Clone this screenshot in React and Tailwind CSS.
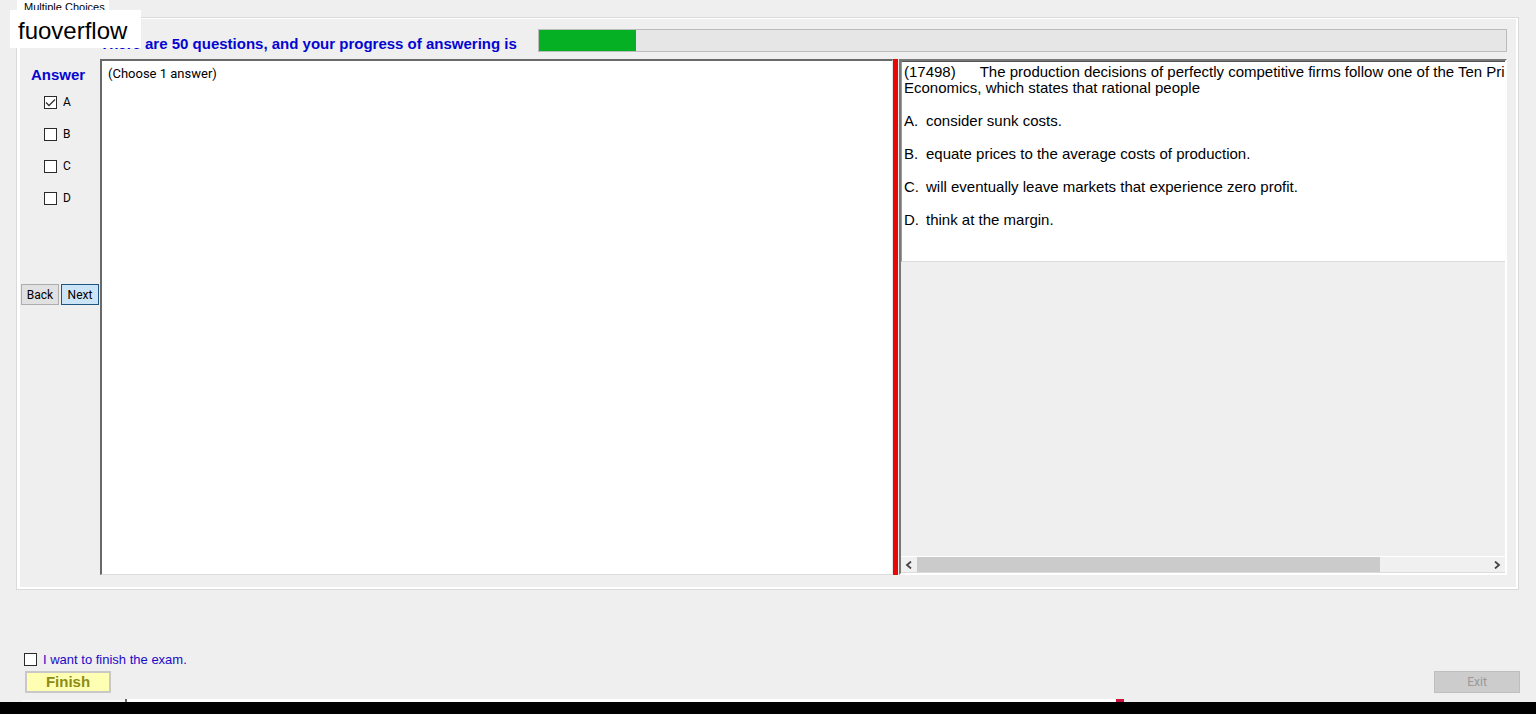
import React, { useState } from "react";

const TOTAL_QUESTIONS = 50;
const ANSWERED = 5;

const options = ["A", "B", "C", "D"];

const question = {
  id: "(17498)",
  lines: [
    "The production decisions of perfectly competitive firms follow one of the Ten Principles of",
    "Economics, which states that rational people",
  ],
  choices: [
    { key: "A", text: "consider sunk costs." },
    { key: "B", text: "equate prices to the average costs of production." },
    {
      key: "C",
      text: "will eventually leave markets that experience zero profit.",
    },
    { key: "D", text: "think at the margin." },
  ],
};

function CheckBox({ id, checked, onChange }) {
  return (
    <span className="relative block h-[13px] w-[13px] shrink-0">
      <input
        id={id}
        type="checkbox"
        checked={checked}
        onChange={onChange}
        className="block h-[13px] w-[13px] appearance-none border border-[#2b2b2b] bg-white"
      />
      {checked && (
        <svg
          viewBox="0 0 13 13"
          className="pointer-events-none absolute inset-0 h-[13px] w-[13px]"
        >
          <path
            d="M2 6.5 L5 9.5 L11 3.5"
            fill="none"
            stroke="#333"
            strokeWidth="1.3"
          />
        </svg>
      )}
    </span>
  );
}

function AnswerColumn({ selected, onToggle }) {
  return (
    <div className="flex w-20 shrink-0 flex-col">
      <h2 className="pt-[7px] pl-[11px] text-[15px] leading-[18px] font-bold text-[#0505d2]">
        Answer
      </h2>
      <div className="mt-[10px] flex flex-col gap-4 pl-6">
        {options.map((option) => (
          <div key={option} className="flex h-4 items-center gap-[6px]">
            <CheckBox
              id={`answer-${option}`}
              checked={selected.includes(option)}
              onChange={() => onToggle(option)}
            />
            <label
              htmlFor={`answer-${option}`}
              className="font-[Roboto] text-[12px] leading-4"
            >
              {option}
            </label>
          </div>
        ))}
      </div>
      <div className="mt-[78px] flex gap-[2px] pl-px font-[Roboto] text-[12px]">
        <button
          type="button"
          className="h-[21px] w-[38px] border border-[#adadad] bg-[#e1e1e1]"
        >
          Back
        </button>
        <button
          type="button"
          className="h-[21px] w-[38px] border border-[#1f5580] bg-[#cce4f7]"
        >
          Next
        </button>
      </div>
    </div>
  );
}

function ScrollArrow({ label, path }) {
  return (
    <button
      type="button"
      aria-label={label}
      className="flex h-[15px] w-4 items-center justify-center"
    >
      <svg viewBox="0 0 8 8" className="h-2 w-2">
        <path d={path} fill="none" stroke="#444" strokeWidth="1.8" />
      </svg>
    </button>
  );
}

function QuestionView() {
  return (
    <div className="ml-px flex w-[608px] shrink-0 flex-col overflow-hidden border-2 border-t-[#777] border-r-white border-b-white border-l-[#777]">
      <div className="h-[201px] overflow-hidden border-t border-b border-l border-t-[#555] border-b-[#dcdcdc] border-l-[#999] bg-white pt-[2px] pl-[2px] text-[15px] leading-4 whitespace-nowrap">
        <p>
          {question.id}
          <span className="pl-6">{question.lines[0]}</span>
        </p>
        <p>{question.lines[1]}</p>
        <ul className="mt-[17px] flex flex-col gap-[17px]">
          {question.choices.map((choice) => (
            <li key={choice.key} className="flex">
              <span className="w-[22px]">{choice.key}.</span>
              <span>{choice.text}</span>
            </li>
          ))}
        </ul>
      </div>
      <div className="mt-auto flex border-t border-b border-t-white border-b-[#dcdcdc] bg-[#f0f0f0]">
        <ScrollArrow label="Scroll left" path="M6 0.5 L2 4 L6 7.5" />
        <div className="h-[15px] flex-1">
          <div className="h-full w-[81%] bg-[#cbcbcb]" />
        </div>
        <ScrollArrow label="Scroll right" path="M2 0.5 L6 4 L2 7.5" />
      </div>
    </div>
  );
}

function App() {
  const [selected, setSelected] = useState(["A"]);
  const [wantFinish, setWantFinish] = useState(false);

  const toggleAnswer = (option) => {
    setSelected((prev) =>
      prev.includes(option)
        ? prev.filter((item) => item !== option)
        : [...prev, option]
    );
  };

  const progress = (ANSWERED / TOTAL_QUESTIONS) * 100;

  return (
    <div className="relative flex min-h-screen flex-col bg-[#efefef] font-['Liberation_Sans',Arial,sans-serif] text-black">
      <div className="flex h-[17px] pl-[17px]">
        <div className="overflow-hidden bg-white pr-1 pl-[7px] text-[11px] leading-[14px]">
          Multiple Choices
        </div>
      </div>

      <div className="absolute top-[10px] left-[10px] bg-white pt-[7px] pr-[14px] pb-[3px] pl-2 text-[24px] leading-7">
        fuoverflow
      </div>

      <main className="mr-[17px] ml-4 flex flex-1 flex-col border border-[#dadada]">
        <div className="flex flex-1 flex-col border-t border-r-2 border-b-2 border-l-3 border-white pr-[9px] pb-[12px]">
          <div className="flex h-[40px] items-start pt-[10px]">
            <p className="w-[518px] shrink-0 pt-[6px] pl-20 text-[15px] leading-[18px] font-bold whitespace-nowrap text-[#0505d2]">
              There are {TOTAL_QUESTIONS} questions, and your progress of
              answering is
            </p>
            <div
              role="progressbar"
              aria-valuenow={progress}
              className="h-[23px] flex-1 border border-[#bcbcbc] bg-[#e6e6e6]"
            >
              <div
                className="h-full bg-[#06b025]"
                style={{ width: `${progress}%` }}
              />
            </div>
          </div>

          <div className="flex flex-1">
            <AnswerColumn selected={selected} onToggle={toggleAnswer} />
            <textarea
              readOnly
              aria-label="Question note"
              defaultValue="(Choose 1 answer)"
              className="min-w-0 flex-1 resize-none border-t-2 border-r border-b border-l-2 border-t-[#696969] border-r-[#e3e3e3] border-b-[#dcdcdc] border-l-[#696969] bg-white px-[6px] pt-[5px] font-[Roboto] text-[13px] leading-4 outline-none"
            />
            <div className="w-[5px] shrink-0 bg-[#ea0606]" />
            <QuestionView />
          </div>
        </div>
      </main>

      <div className="mt-[59px] flex items-end justify-between pr-4 pb-[6px] pl-6">
        <div>
          <div className="flex items-center gap-[6px]">
            <CheckBox
              id="want-finish"
              checked={wantFinish}
              onChange={(e) => setWantFinish(e.target.checked)}
            />
            <label
              htmlFor="want-finish"
              className="pt-[2px] text-[13px] leading-[18px] text-[#1a0ac8]"
            >
              I want to finish the exam.
            </label>
          </div>
          <button
            type="button"
            className="mt-[2px] ml-px block h-[22px] w-[86px] border-2 border-[#c8c8c8] bg-[#ffffb4] text-[15px] leading-[18px] font-bold text-[#8c8c14]"
          >
            Finish
          </button>
        </div>
        <button
          type="button"
          disabled
          className="h-[22px] w-[86px] border border-[#bfbfbf] bg-[#cccccc] font-[Roboto] text-[12px] text-[#999]"
        >
          Exit
        </button>
      </div>

      {/* top edge of the window behind, just above the black bar */}
      <div className="flex h-[3px] items-end pl-[22px]">
        <div className="h-[2px] w-[103px] bg-[#f6f6f6]" />
        <div className="h-[3px] w-[2px] bg-[#696969]" />
        <div className="h-[3px] w-[989px] bg-white" />
        <div className="h-[3px] w-2 bg-[#c8143c]" />
      </div>
      <div className="h-3 bg-black" />
    </div>
  );
}

export default App;
